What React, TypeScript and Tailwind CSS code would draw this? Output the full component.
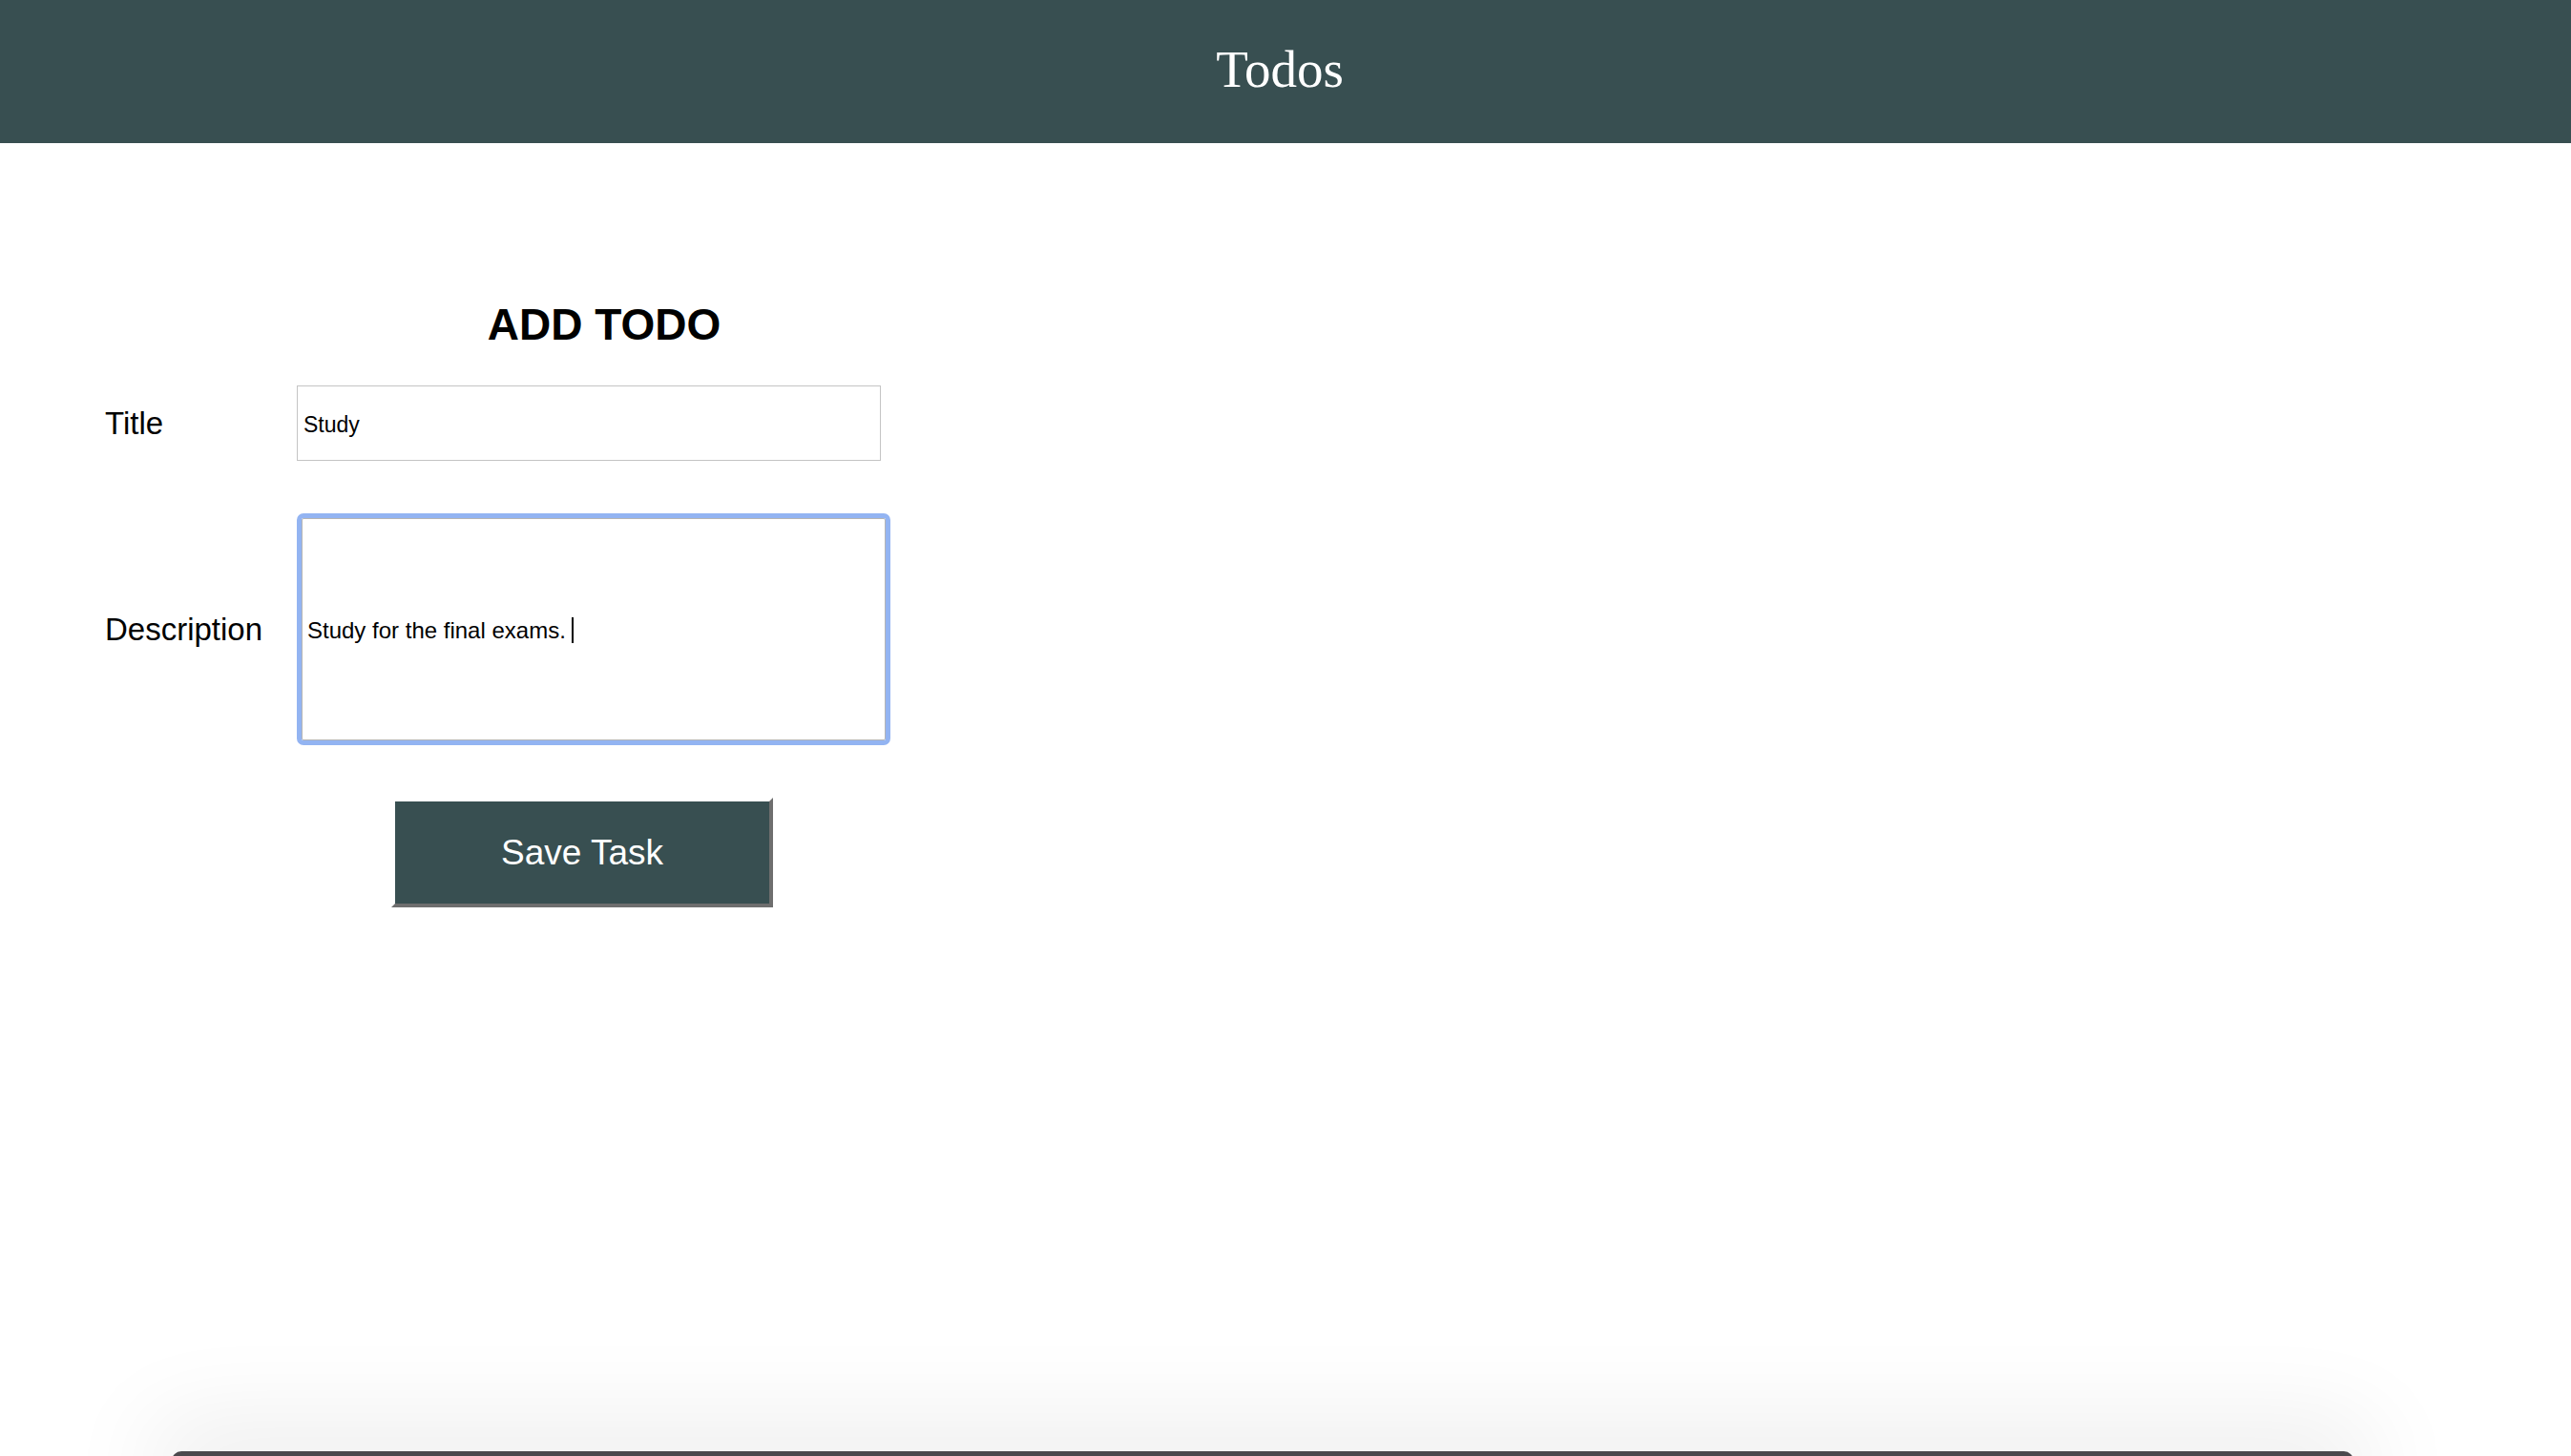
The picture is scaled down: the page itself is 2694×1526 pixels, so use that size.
export default function App() {
  return (
    <div className="relative h-[1526px] w-full overflow-hidden bg-white font-['Liberation_Sans',Arial,sans-serif] text-black">
      <header className="h-[150px] bg-[#384f51] pt-[42px] pr-[12px] text-center">
        <h1 className="font-['Liberation_Serif','Times_New_Roman',serif] text-[55px] leading-[62px] text-white">
          Todos
        </h1>
      </header>

      <main className="pl-[110px]">
        <h2 className="mt-[164px] w-[1046px] text-center text-[46px] font-bold leading-[53px]">
          ADD TODO
        </h2>

        <div className="mt-[37px] flex items-center">
          <label className="w-[201px] text-[33px] leading-[37px]">Title</label>
          <input
            type="text"
            defaultValue="Study"
            className="h-[79px] w-[612px] border border-[#c4c4c4] px-[6px] pt-[4px] text-[23px] text-black outline-none"
          />
        </div>

        <div className="mt-[60px] flex items-center">
          <label className="w-[201px] text-[33px] leading-[37px]">Description</label>
          <div
            role="textbox"
            className="ml-[5px] flex h-[233px] w-[612px] items-center rounded-[2px] border border-[#b5b5b5] pl-[5px] pt-[2px] text-[24px] outline outline-[5px] outline-[#93b4f2]"
          >
            <span>Study for the final exams.</span>
            <span className="ml-[6px] inline-block h-[27px] w-[2px] bg-black" />
          </div>
        </div>

        <button className="mt-[60px] ml-[300px] flex h-[115px] w-[400px] items-center justify-center border-4 border-t-white border-l-white border-r-[#6e6e6e] border-b-[#6e6e6e] bg-[#384f51] text-[37px] text-white">
          Save Task
        </button>
      </main>

      <div className="absolute bottom-[-40px] left-[180px] h-[45px] w-[2286px] rounded-t-[10px] bg-[#4b494d] shadow-[0_-10px_100px_20px_rgba(0,0,0,0.08)]" />
    </div>
  );
}
